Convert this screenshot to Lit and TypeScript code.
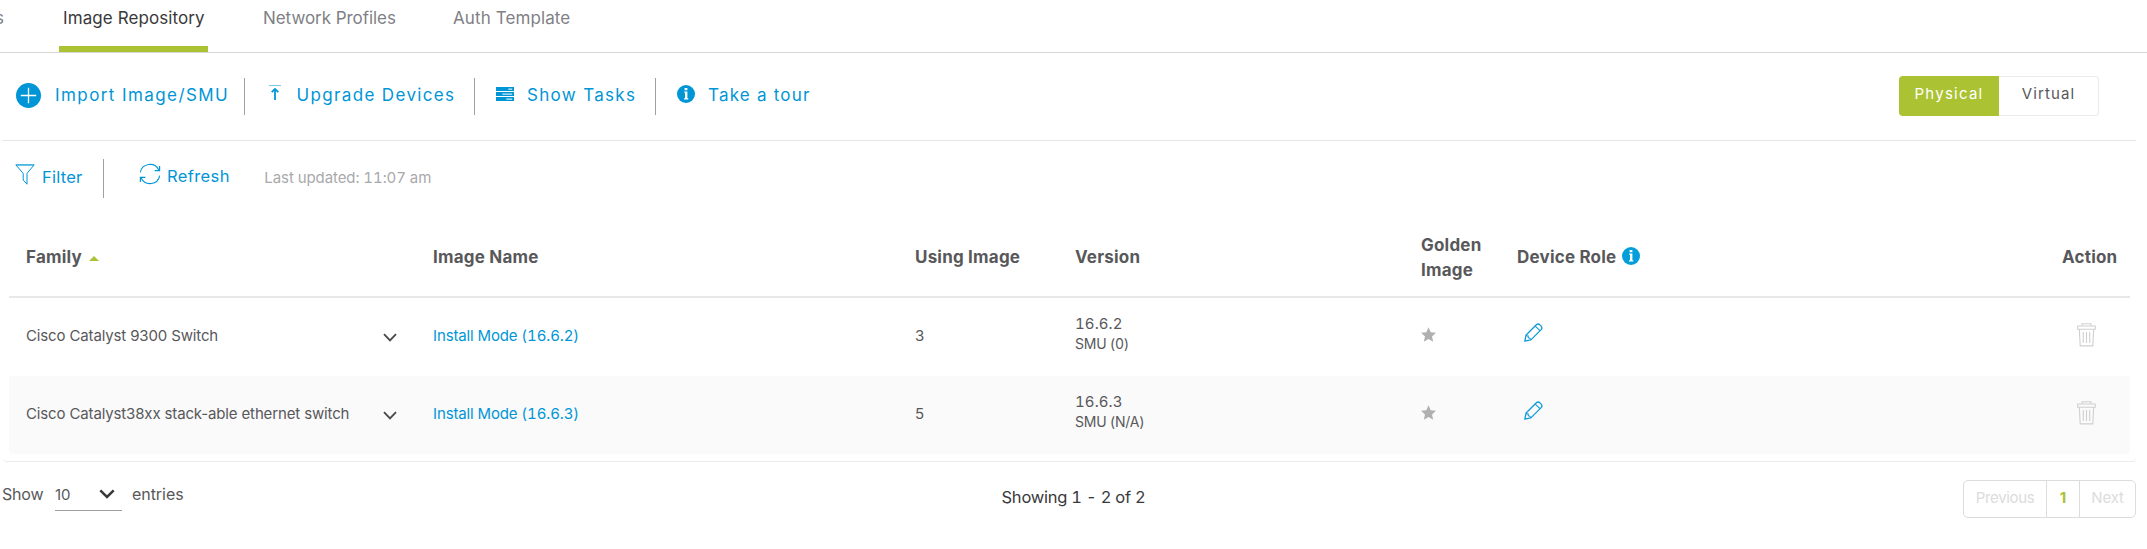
import { LitElement, html, css, svg } from "lit";
import { customElement, state } from "lit/decorators.js";

interface ImageRow {
  family: string;
  image: string;
  using: number;
  version: string;
  smu: string;
}

const ROWS: ImageRow[] = [
  { family: "Cisco Catalyst 9300 Switch", image: "Install Mode (16.6.2)", using: 3, version: "16.6.2", smu: "SMU (0)" },
  { family: "Cisco Catalyst38xx stack-able ethernet switch", image: "Install Mode (16.6.3)", using: 5, version: "16.6.3", smu: "SMU (N/A)" },
];

const icon = (w: number, h: number, body: unknown, cls = "") =>
  html`<svg class="icon ${cls}" width=${w} height=${h} viewBox="0 0 ${w} ${h}" fill="none" aria-hidden="true">${body}</svg>`;

const plusIcon = icon(25, 25, svg`<circle cx="12.5" cy="12.5" r="12.5" fill="currentColor"/><path d="M12.5 4.8v15.4M4.8 12.5h15.4" stroke="#fff" stroke-width="1.3"/>`);
const uploadIcon = icon(12, 16, svg`<path d="M0 .6h12" stroke="currentColor" stroke-width="1" opacity=".55"/><path d="M6 15V5" stroke="currentColor" stroke-width="1.8"/><path d="M2.7 7.2 6 3.9l3.3 3.3" stroke="currentColor" stroke-width="1.8"/>`, "upload");
const tasksIcon = icon(18, 14, svg`<path d="M0 0h18v4H0zM0 5h18v4H0zM0 10h18v4H0z" fill="currentColor"/><path d="M12.3 1.4h3.9v1.3h-3.9zM6.3 6.4h9.9v1.3H6.3zM10.3 11.4h5.9v1.3h-5.9z" fill="#fff" opacity=".8"/>`, "tasks");
const infoIcon = icon(18, 18, svg`<circle cx="9" cy="9" r="9" fill="currentColor"/><path d="M7.6 3h2.8v2.2H7.6zM7.2 6.4h3.2v6.8h.9v1.3H7v-1.3h1V7.7h-.8z" fill="#fff"/>`, "info");
const filterIcon = icon(20, 21, svg`<path d="M.8 .8h18.4L12 9.4v10.8L8.2 16V9.4z" stroke="currentColor" stroke-width="1"/><path d="M2 1.5h16" stroke="currentColor" stroke-width=".8" opacity=".5"/>`);
const refreshIcon = icon(22, 22, svg`<path d="M1.3 9.4A9.8 9.8 0 0 1 19.8 7M20.7 12.6A9.8 9.8 0 0 1 2.2 15" stroke="currentColor" stroke-width="1.1"/><path d="M20.6 3v4.7h-5M1.4 19v-4.7h5" stroke="currentColor" stroke-width="1.2"/>`);
const chevronIcon = icon(14, 9, svg`<path d="M1 1.2 7 7.4l6-6.2" stroke="#4a4a4a" stroke-width="1.9"/>`, "chevron");
const selectIcon = icon(16, 10, svg`<path d="M1.3 1.4 8 8l6.7-6.6" stroke="#39393b" stroke-width="2.5"/>`);
const starIcon = icon(15, 15, svg`<path d="M7.5 .3l2.2 4.9 5.3.6-4 3.6 1.2 5.3-4.7-2.7-4.7 2.7L4 9.4 0 5.8l5.3-.6z" fill="#b0b0b0"/>`, "star");
const pencilIcon = icon(19, 19, svg`<path d="M.8 18.2 2.1 12 12.6 1.5q1.7-1.3 3.6.6l.8.8q1.6 1.8.4 3.5L6.9 16.9z" stroke="currentColor" stroke-width="1.3" stroke-linejoin="round"/><path d="M11.3 3.1l4.6 4.6M2.1 12.2q.9 1 2 .8-.2 1.2.8 2 1.2-.2 1.8 1.6" stroke="currentColor" stroke-width="1.1"/>`, "pencil");
const trashIcon = icon(19, 24, svg`<path d="M.7 3h17.6v3.3H.7zM5 3V.8h9V3M2.3 6.3 3.2 22.9h12.6l.9-16.6M6.3 9v11M9.5 9v11M12.7 9v11" stroke="#d0d0d0" stroke-width="1.1"/>`, "trash");

@customElement("app-root")
export class AppRoot extends LitElement {
  @state() private mode = "Physical";

  static styles = css`
    :host { display: block; height: 549px; overflow: hidden; background: #fff; color: #58585b; font-family: Inter, "Liberation Sans", sans-serif; font-size: 15px; }
    .icon { display: block; flex: none; }
    .tabs { display: flex; height: 52px; border-bottom: 1px solid #d6d6d6; font-size: 17px; line-height: 36px; color: #7f7f86; white-space: nowrap; }
    .tab { box-sizing: border-box; }
    .tab.cut { width: 64px; margin-left: -5px; flex: none; }
    .tab.active { width: 149px; padding-left: 4px; margin-right: 55px; color: #39393b; letter-spacing: .09px; border-bottom: 6px solid #abc233; }
    .tab.network { width: 190px; letter-spacing: -.05px; }
    .tab.auth { letter-spacing: .1px; }
    .toolbar { display: flex; align-items: center; height: 87px; margin: 0 11px 0 2px; border-bottom: 1px solid #e6e6e6; }
    .tool { box-sizing: border-box; display: flex; align-items: center; height: 37px; padding-bottom: 3px; color: #0096d6; font-size: 17px; letter-spacing: 1.35px; white-space: nowrap; }
    .tool + .tool { border-left: 1px solid #a0a0a0; }
    .import { width: 242px; padding-left: 14px; gap: 14px; letter-spacing: 1.42px; }
    .import .icon { margin-top: 1px; }
    .upgrade { width: 230px; padding-left: 23.5px; gap: 16px; }
    .show { width: 181px; padding-left: 21px; gap: 13px; letter-spacing: 1.32px; }
    .tour { padding-left: 21px; gap: 13px; letter-spacing: 1.21px; }
    .upload { margin-top: -5px; }
    .tasks, .tour .info { margin-top: -2px; }
    .toggle { display: flex; margin: -1px 37px 0 auto; height: 40px; }
    .option { box-sizing: border-box; width: 100px; text-align: center; padding: 0 0 5px; font: inherit; font-size: 15px; letter-spacing: 1.1px; color: #58585b; background: #fff; border: 1px solid #ebebeb; border-left: 0; border-radius: 0 4px 4px 0; }
    .option:first-child { border: 0; border-radius: 4px 0 0 4px; }
    .option.on { background: #abc233; color: #fff; letter-spacing: 1.24px; }
    .controls { display: flex; align-items: center; height: 75px; padding: 0 0 1px 15px; color: #0096d6; font-size: 16.5px; white-space: nowrap; }
    .control { box-sizing: border-box; display: flex; align-items: center; height: 39px; }
    .filter { width: 89px; gap: 7px; border-right: 1px solid #a0a0a0; letter-spacing: .23px; }
    .filter .icon { margin-top: -8px; }
    .filter .label { margin-top: -3px; }
    .refresh { margin-left: 35px; gap: 6px; letter-spacing: .38px; }
    .refresh .icon { margin-top: -10px; }
    .refresh .label { margin-top: -5px; }
    .updated { margin-left: 34.5px; margin-top: -3px; font-size: 15px; letter-spacing: -.08px; color: #a9a9ab; font-variant-numeric: tabular-nums; }
    .panel { margin: 0 11px 0 3px; padding: 0 6px 7px; border-bottom: 1px solid #ebebeb; border-radius: 0 0 4px 4px; }
    .row { display: grid; grid-template-columns: 407px 482px 160px 346px 96px 1fr 68px; align-items: center; height: 78px; padding-left: 17px; }
    .row.alt { background: #fafafa; border-radius: 0 0 4px 4px; }
    .row.head { height: 77px; padding-top: 2px; border-bottom: 2px solid #e8e8e8; font-size: 17px; font-weight: 700; line-height: 25px; letter-spacing: .2px; }
    .sort { display: inline-block; margin-left: 7px; border: solid transparent; border-width: 0 5px 5.5px; border-bottom-color: #abc233; vertical-align: 2px; }
    .role { display: flex; align-items: center; gap: 6px; }
    .role .info { color: #049fd9; margin-top: -3px; }
    .family { display: flex; justify-content: space-between; align-items: center; padding-right: 36px; letter-spacing: -.14px; }
    .text { margin-bottom: 4px; }
    .chevron { margin-top: 1px; }
    .link { color: #0096d6; letter-spacing: -.13px; font-variant-numeric: tabular-nums; }
    .version { line-height: 20.5px; margin-bottom: 6px; letter-spacing: .1px; font-variant-numeric: tabular-nums; }
    .smu { font-size: 14px; letter-spacing: -.25px; }
    .star { margin: 0 0 6px 0; }
    .pencil { margin: 0 0 10px 7px; color: #0f9bd8; }
    .trash { margin: 0 0 5px 15px; }
    .footer { display: grid; grid-template-columns: 1fr auto 1fr; align-items: start; padding-top: 18px; }
    .length { display: flex; padding-left: 2px; font-size: 16px; line-height: 29px; letter-spacing: -.05px; }
    .show-label { width: 53px; letter-spacing: -.2px; }
    .select { box-sizing: border-box; display: flex; align-items: center; justify-content: space-between; width: 67px; height: 31px; padding: 0 7px 2px 0; border-bottom: 1px solid #a0a0a0; font-size: 15px; margin-right: 10px; }
    .summary { color: #39393b; font-size: 16.5px; line-height: 35px; letter-spacing: -.24px; font-variant-numeric: tabular-nums; }
    .pager { justify-self: end; display: flex; box-sizing: border-box; height: 38px; margin-right: 11px; border: 1px solid #dcdcdc; border-radius: 5px; line-height: 34px; letter-spacing: -.2px; color: #dcdcdc; text-align: center; }
    .previous { width: 82px; letter-spacing: -.34px; }
    .page { width: 32px; border: solid #dcdcdc; border-width: 0 1px; color: #abc233; font-weight: 700; }
    .next { width: 55px; }
  `;

  private renderRow(row: ImageRow, index: number) {
    return html`
      <div class="row ${index % 2 ? "alt" : ""}">
        <div class="family"><span class="text">${row.family}</span>${chevronIcon}</div>
        <div class="link text">${row.image}</div>
        <div class="text">${row.using}</div>
        <div class="version"><div>${row.version}</div><div class="smu">${row.smu}</div></div>
        <div>${starIcon}</div>
        <div>${pencilIcon}</div>
        <div>${trashIcon}</div>
      </div>`;
  }

  render() {
    return html`
      <nav class="tabs">
        <div class="tab cut">s</div>
        <div class="tab active">Image Repository</div>
        <div class="tab network">Network Profiles</div>
        <div class="tab auth">Auth Template</div>
      </nav>
      <div class="toolbar">
        <div class="tool import">${plusIcon}<span>Import Image/SMU</span></div>
        <div class="tool upgrade">${uploadIcon}<span>Upgrade Devices</span></div>
        <div class="tool show">${tasksIcon}<span>Show Tasks</span></div>
        <div class="tool tour">${infoIcon}<span>Take a tour</span></div>
        <div class="toggle">
          ${["Physical", "Virtual"].map((name) => html`
            <button class="option ${this.mode === name ? "on" : ""}" @click=${() => (this.mode = name)}>${name}</button>`)}
        </div>
      </div>
      <div class="controls">
        <div class="control filter">${filterIcon}<span class="label">Filter</span></div>
        <div class="control refresh">${refreshIcon}<span class="label">Refresh</span></div>
        <span class="updated">Last updated: 11:07 am</span>
      </div>
      <div class="panel">
        <div class="row head">
          <div>Family<span class="sort"></span></div>
          <div>Image Name</div>
          <div>Using Image</div>
          <div>Version</div>
          <div>Golden<br />Image</div>
          <div class="role">Device Role${infoIcon}</div>
          <div>Action</div>
        </div>
        ${ROWS.map((row, i) => this.renderRow(row, i))}
      </div>
      <div class="footer">
        <div class="length">
          <span class="show-label">Show</span>
          <span class="select">10${selectIcon}</span>
          <span>entries</span>
        </div>
        <div class="summary">Showing 1 - 2 of 2</div>
        <div class="pager">
          <span class="previous">Previous</span><span class="page">1</span><span class="next">Next</span>
        </div>
      </div>`;
  }
}
